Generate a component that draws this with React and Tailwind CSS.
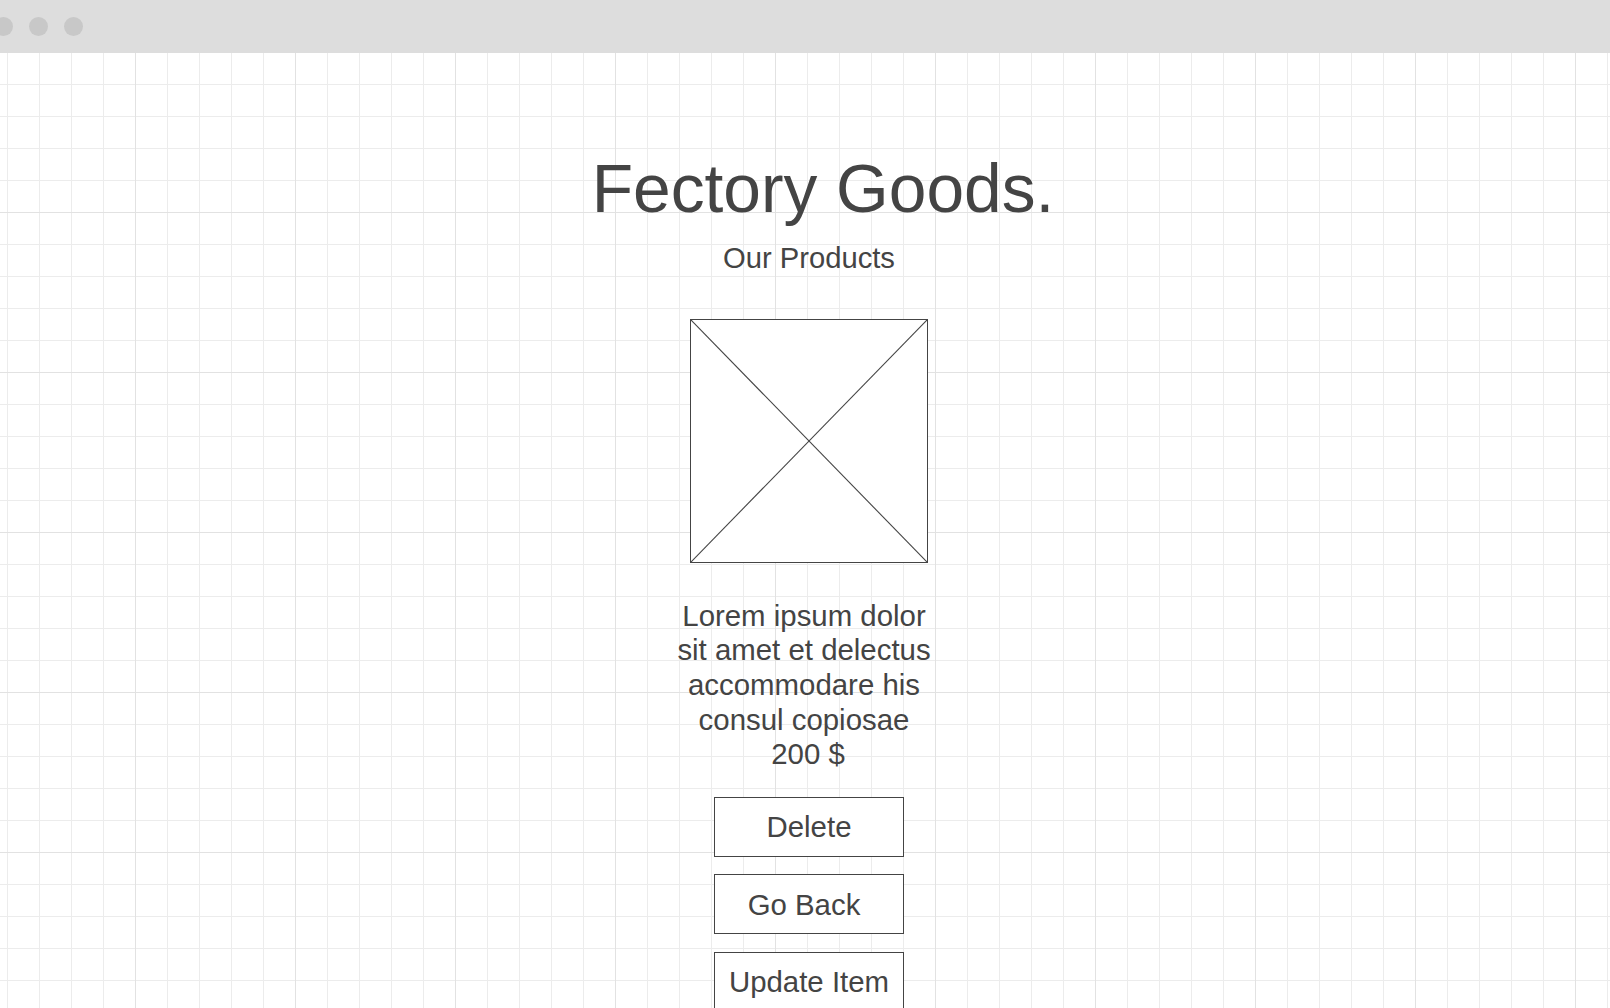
export default function App() {
  return (
    <div className="h-[1008px] w-full overflow-hidden bg-white flex flex-col font-['Liberation_Sans',Arial,sans-serif] text-[#444444]">
      <div className="h-[53px] shrink-0 bg-[#dddddd] flex items-center gap-[16.4px]">
        <span className="-ml-[6.5px] w-[19px] h-[19px] rounded-full bg-[#c8c8c8] shrink-0" />
        <span className="w-[19px] h-[19px] rounded-full bg-[#c8c8c8] shrink-0" />
        <span className="w-[19px] h-[19px] rounded-full bg-[#c8c8c8] shrink-0" />
      </div>
      <main className="flex-1 flex flex-col items-center pl-[8px] pt-[101.7px] [background-image:linear-gradient(to_right,#e2e2e2_1px,transparent_1px),linear-gradient(to_bottom,#e2e2e2_1px,transparent_1px),linear-gradient(to_right,#ececec_1px,transparent_1px),linear-gradient(to_bottom,#ececec_1px,transparent_1px)] [background-size:160px_160px,160px_160px,32px_32px,32px_32px] [background-position:135px_0,0_159px,7px_0,0_31px]">
        <h1 className="text-[67.7px] leading-none ml-[28px] whitespace-nowrap">Fectory Goods.</h1>
        <h2 className="mt-[21.5px] text-[29.2px] leading-none whitespace-nowrap">Our Products</h2>
        <div className="mt-[45.6px] w-[238px] h-[244px] border border-[#444444] bg-white shrink-0">
          <svg className="w-full h-full block" viewBox="0 0 100 100" preserveAspectRatio="none">
            <line x1="0" y1="0" x2="100" y2="100" stroke="#444444" strokeWidth="1.1" vectorEffect="non-scaling-stroke" />
            <line x1="100" y1="0" x2="0" y2="100" stroke="#444444" strokeWidth="1.1" vectorEffect="non-scaling-stroke" />
          </svg>
        </div>
        <div className="mt-[36.2px] mr-[10px] text-[29.4px] leading-[34.6px] text-center whitespace-nowrap">
          <div>Lorem ipsum dolor</div>
          <div>sit amet et delectus</div>
          <div>accommodare his</div>
          <div>consul copiosae</div>
          <div className="ml-[8px]">200 $</div>
        </div>
        <div className="mt-[24.8px] flex flex-col gap-[17.6px] shrink-0">
          <button className="w-[190px] h-[60px] border border-[#444444] bg-white flex items-center justify-center text-[29.4px] leading-none text-[#444444]">
            Delete
          </button>
          <button className="w-[190px] h-[60px] border border-[#444444] bg-white flex items-center justify-center text-[29.4px] leading-none text-[#444444]">
            <span className="mr-[10px]">Go Back</span>
          </button>
          <button className="w-[190px] h-[60px] border border-[#444444] bg-white flex items-center justify-center text-[29.4px] leading-none text-[#444444] shrink-0">
            Update Item
          </button>
        </div>
      </main>
    </div>
  );
}
